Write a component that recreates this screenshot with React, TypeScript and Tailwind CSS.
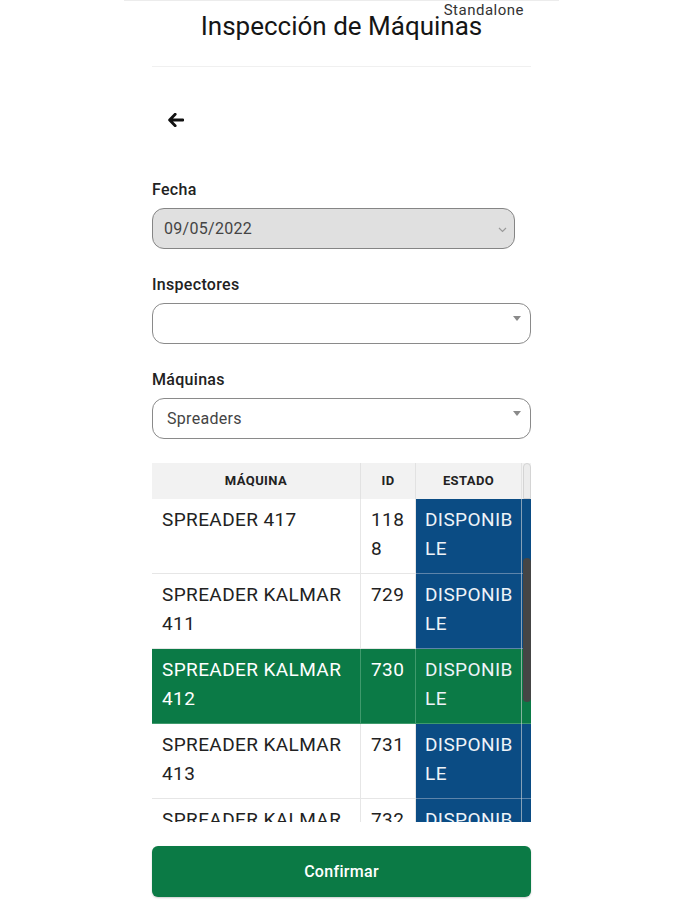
import React from 'react';

type Row = { name: string; id: string; estado: string; selected?: boolean };

const rows: Row[] = [
  { name: 'SPREADER 417', id: '1188', estado: 'DISPONIBLE' },
  { name: 'SPREADER KALMAR 411', id: '729', estado: 'DISPONIBLE' },
  { name: 'SPREADER KALMAR 412', id: '730', estado: 'DISPONIBLE', selected: true },
  { name: 'SPREADER KALMAR 413', id: '731', estado: 'DISPONIBLE' },
  { name: 'SPREADER KALMAR 414', id: '732', estado: 'DISPONIBLE' },
];

const Caret = () => (
  <svg width="8" height="5" viewBox="0 0 8 5" className="absolute right-[9px] top-[12px]">
    <path d="M0 0 L8 0 L4 5 Z" fill="#8a8a8a" />
  </svg>
);

const App: React.FC = () => {
  return (
    <div className="min-h-[900px] bg-white flex font-['Roboto',sans-serif]">
      <div className="relative ml-[124px] w-[435px] px-7 border-t border-[#ececec]">
        <span className="absolute top-[0px] right-[35px] text-[15px] leading-[18px] tracking-[0.5px] text-[#333]">
          Standalone
        </span>

        {/* Header */}
        <div className="h-[66px] border-b border-[#f0f0f0] flex justify-center pt-[8px]">
          <h1 className="text-[26px] leading-[34px] text-[#151515]">Inspección de Máquinas</h1>
        </div>

        <div className="mt-[33px] h-[40px] flex items-center pl-[16px]">
          <svg width="16" height="14" viewBox="0 0 16 14">
            <path
              d="M7.2 1.2 L1.6 7 L7.2 12.8 M1.8 7 H15"
              stroke="#111"
              strokeWidth="2.8"
              strokeLinecap="round"
              strokeLinejoin="round"
              fill="none"
            />
          </svg>
        </div>

        {/* Fecha */}
        <label className="block mt-[40px] text-[16px] leading-[20px] tracking-[0.3px] font-medium text-[#222]">
          Fecha
        </label>
        <div className="relative mt-[8px] w-[363px] h-[41px] rounded-[12px] border border-[#858585] bg-[#e0e0e0] flex items-center pl-[11px]">
          <span className="text-[16px] tracking-[0.3px] text-[#444]">09/05/2022</span>
          <svg width="9" height="6" viewBox="0 0 9 6" className="absolute right-[7px] top-[18px]">
            <path d="M1 1 L4.5 4.5 L8 1" stroke="#9a9a9a" strokeWidth="1.2" fill="none" />
          </svg>
        </div>

        {/* Inspectores */}
        <label className="block mt-[26px] text-[16px] leading-[20px] tracking-[0.3px] font-medium text-[#222]">
          Inspectores
        </label>
        <div className="relative mt-[8px] h-[41px] rounded-[12px] border border-[#8a8a8a] bg-white">
          <Caret />
        </div>

        {/* Máquinas */}
        <label className="block mt-[26px] text-[16px] leading-[20px] tracking-[0.3px] font-medium text-[#222]">
          Máquinas
        </label>
        <div className="relative mt-[8px] h-[41px] rounded-[12px] border border-[#8a8a8a] bg-white flex items-center pl-[14px]">
          <span className="text-[16px] tracking-[0.3px] text-[#444]">Spreaders</span>
          <Caret />
        </div>

        {/* Table */}
        <div className="relative mt-[24px] h-[359px] overflow-hidden">
          <div className="grid grid-cols-[209px_55px_115px] h-[36px] bg-[#f2f2f2] text-[13px] tracking-[0.4px] font-bold text-[#222] items-center text-center">
            <div className="h-full flex items-center justify-center border-r border-[#e2e2e2]">MÁQUINA</div>
            <div className="h-full flex items-center justify-center border-r border-[#e2e2e2]">ID</div>
            <div className="h-full flex items-center justify-center pr-[10px]">ESTADO</div>
          </div>
          {rows.map((r) => (
            <div
              key={r.id}
              className={`grid grid-cols-[209px_55px_115px] h-[75px] text-[19px] leading-[29px] tracking-[0.4px] ${
                r.selected ? 'bg-[#0b7a46] text-white' : 'bg-white text-[#222]'
              }`}
            >
              <div
                className={`pl-[10px] pr-[8px] pt-[6px] border-r border-b ${
                  r.selected ? 'border-[#3f9a6c]' : 'border-[#e6e6e6]'
                }`}
              >
                {r.name}
              </div>
              <div
                className={`pl-[10px] pr-[7px] pt-[6px] break-all border-r border-b ${
                  r.selected ? 'border-[#3f9a6c]' : 'border-[#e6e6e6]'
                }`}
              >
                {r.id}
              </div>
              <div
                className={`pl-[9px] pr-[14px] pt-[6px] break-all border-b text-[#eef3f8] ${
                  r.selected ? 'bg-[#0b7a46] border-[#3f9a6c]' : 'bg-[#0b4c84] border-[#5d84aa]'
                }`}
              >
                {r.estado}
              </div>
            </div>
          ))}

          {/* scrollbar */}
          <div className="absolute right-0 top-0 w-[10px] h-full border-l border-[#d8d8d8]/60">
            <div className="absolute left-[1px] top-0 w-[8px] h-[36px] rounded-t-[4px] bg-[#ececec] border border-[#d4d4d4]" />
            <div className="absolute left-[1px] top-[95px] w-[8px] h-[144px] rounded-[4px] bg-[#454545]" />
          </div>
        </div>

        <button className="mt-[24px] w-full h-[51px] rounded-[6px] bg-[#0b7a45] text-white text-[16px] tracking-[0.3px] font-medium shadow-[0_1px_2px_rgba(0,0,0,0.2)]">
          Confirmar
        </button>
      </div>
    </div>
  );
};

export default App;
